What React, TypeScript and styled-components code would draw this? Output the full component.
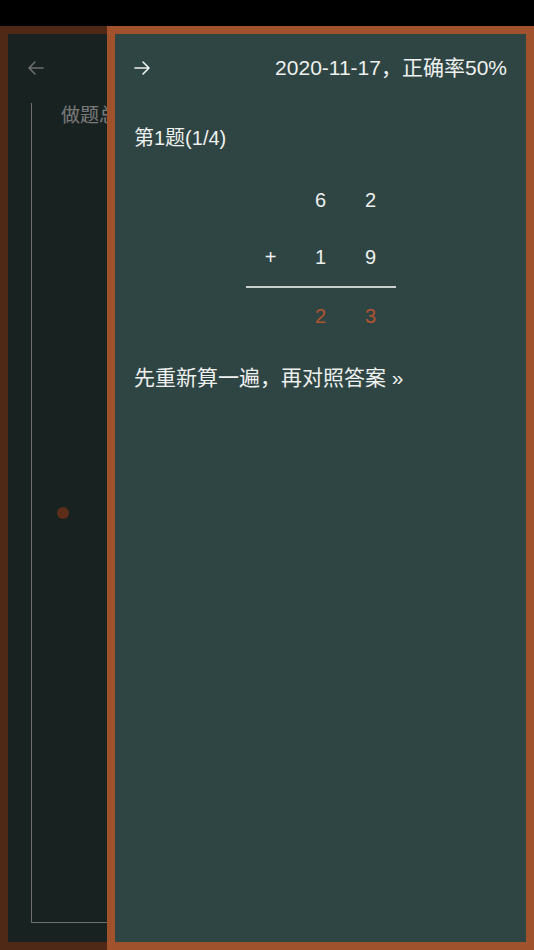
import styled, { createGlobalStyle } from "styled-components";

const GlobalStyle = createGlobalStyle`
  html, body {
    margin: 0;
    padding: 0;
    background: #000;
  }
  body {
    font-family: "Liberation Sans", "Noto Sans CJK SC", sans-serif;
    color: #eef1f0;
  }
`;

const Screen = styled.div`
  position: relative;
  width: 534px;
  height: 950px;
  padding-top: 26px;
  box-sizing: border-box;
  overflow: hidden;
`;

const Page = styled.div`
  height: 924px;
  box-sizing: border-box;
  border: 8px solid #a0522d;
  background: #2f4543;
  display: flex;
  flex-direction: column;
  padding: 0 20px 19px 20px;
`;

const Header = styled.div`
  height: 68px;
  flex-shrink: 0;
  display: flex;
  align-items: center;
  justify-content: space-between;
  font-size: 21px;
  line-height: 24px;
`;

const Chart = styled.div`
  position: relative;
  flex: 1;
  margin: 1px 0 0 3px;
  border-left: 1px solid #dcdcdc;
  border-bottom: 1px solid #dcdcdc;
  padding-left: 29px;
`;

const ChartTitle = styled.div`
  font-size: 19px;
  line-height: 26px;
  color: #f2f2f2;
  white-space: nowrap;
`;

const Point = styled.div`
  position: absolute;
  width: 12px;
  height: 12px;
  border-radius: 50%;
  background: #b85a32;
`;

const Overlay = styled.div`
  position: absolute;
  top: 26px;
  left: 0;
  right: 0;
  bottom: 0;
  background: rgba(0, 0, 0, 0.5);
`;

const Drawer = styled.div`
  position: absolute;
  top: 26px;
  left: 107px;
  right: 0;
  bottom: 0;
  box-sizing: border-box;
  border: 8px solid #a0522d;
  background: #2f4543;
  padding: 0 19px;
  display: flex;
  flex-direction: column;
`;

const Title = styled.div`
  margin-top: 22px;
  font-size: 20px;
  line-height: 28px;
`;

const Problem = styled.div`
  margin: 20px auto 0;
  display: grid;
  grid-template-columns: repeat(3, 50px);
  font-size: 20px;
`;

const Row = styled.div`
  display: contents;
`;

const Cell = styled.div<{ $answer?: boolean; $line?: boolean }>`
  height: 57px;
  display: flex;
  align-items: center;
  justify-content: center;
  color: ${(p) => (p.$answer ? "#b4532f" : "#eef1f0")};
  border-bottom: ${(p) => (p.$line ? "2px solid #c9cfcd" : "none")};
`;

const Hint = styled.div`
  margin-top: 19px;
  font-size: 21px;
  line-height: 28px;
  white-space: nowrap;
`;

const Arrow = ({ dir, color }: { dir: "left" | "right"; color: string }) => (
  <svg width="16" height="14" viewBox="0 0 16 14" fill="none">
    <path
      d={dir === "right" ? "M1 7h14M9 1l6 6-6 6" : "M15 7H1M7 1L1 7l6 6"}
      stroke={color}
      strokeWidth="1.6"
      strokeLinecap="round"
      strokeLinejoin="round"
    />
  </svg>
);

const rows = [
  ["", "6", "2"],
  ["+", "1", "9"],
  ["", "2", "3"],
];

function App() {
  return (
    <Screen>
      <GlobalStyle />
      <Page>
        <Header>
          <Arrow dir="left" color="#dcdcdc" />
        </Header>
        <Chart>
          <ChartTitle>做题总数</ChartTitle>
          <Point style={{ left: 25, top: 404 }} />
        </Chart>
      </Page>
      <Overlay />
      <Drawer>
        <Header>
          <Arrow dir="right" color="#eef1f0" />
          <span>2020-11-17，正确率50%</span>
        </Header>
        <Title>第1题(1/4)</Title>
        <Problem>
          {rows.map((r, i) => (
            <Row key={i}>
              {r.map((c, j) => (
                <Cell key={j} $line={i === 1} $answer={i === 2}>
                  {c}
                </Cell>
              ))}
            </Row>
          ))}
        </Problem>
        <Hint>先重新算一遍，再对照答案 »</Hint>
      </Drawer>
    </Screen>
  );
}

export default App;
